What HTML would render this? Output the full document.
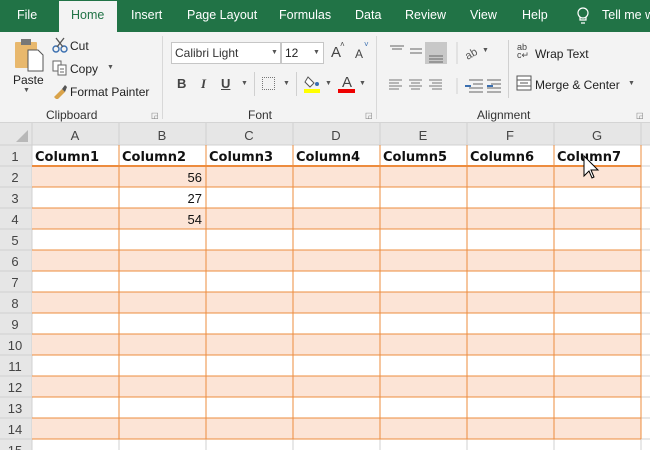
<!DOCTYPE html>
<html><head><meta charset="utf-8"><style>
*{margin:0;padding:0;box-sizing:border-box}
body{width:650px;height:450px;overflow:hidden;background:#fff;font-family:"Liberation Sans",sans-serif;position:relative}
.a{position:absolute;white-space:nowrap}
.tab{position:absolute;top:8px;color:#fff;font-size:12.5px;white-space:nowrap}
.r{font-size:12px;color:#222}
.sm{font-size:11px;color:#444}
</style></head><body>
<div class="a" style="left:0;top:0;width:650px;height:32px;background:#217346"></div>
<div class="a" style="left:59px;top:1px;width:58px;height:31px;background:#f3f3f3"></div>
<span class="tab" style="left:17px">File</span>
<span class="tab" style="left:71px;color:#217346">Home</span>
<span class="tab" style="left:131px">Insert</span>
<span class="tab" style="left:187px">Page Layout</span>
<span class="tab" style="left:279px">Formulas</span>
<span class="tab" style="left:355px">Data</span>
<span class="tab" style="left:405px">Review</span>
<span class="tab" style="left:470px">View</span>
<span class="tab" style="left:522px">Help</span>
<svg class="a" style="left:576px;top:7px" width="14" height="18"><circle cx="7" cy="6" r="5" fill="none" stroke="#fff" stroke-width="1.2"/><path d="M4 10v3h6v-3M5 16h4" stroke="#fff" stroke-width="1.2" fill="none"/></svg>
<span class="tab" style="left:602px">Tell me w</span>

<div class="a" style="left:0;top:32px;width:650px;height:91px;background:#f3f3f3;border-bottom:1px solid #d4d4d4"></div>
<svg class="a" style="left:14px;top:38px" width="30" height="34"><rect x="1" y="4" width="22" height="26" fill="#e8b86d" rx="1"/><rect x="7" y="1" width="10" height="6" fill="#777"/><path d="M14 12h10l5 5v16h-15z" fill="#fff" stroke="#555"/></svg>
<span class="a r" style="left:13px;top:73px">Paste</span>
<span class="a" style="left:23px;top:87px;font-size:7px;color:#555">▼</span>
<svg class="a" style="left:52px;top:37px" width="16" height="16"><circle cx="4" cy="12" r="3" fill="none" stroke="#3a6fb0" stroke-width="1.4"/><circle cx="12" cy="12" r="3" fill="none" stroke="#3a6fb0" stroke-width="1.4"/><path d="M5 10L12 1M11 10L4 1" stroke="#555" stroke-width="1.3"/></svg>
<span class="a r" style="left:70px;top:39px">Cut</span>
<svg class="a" style="left:52px;top:60px" width="16" height="16"><rect x="1" y="1" width="8" height="10" fill="#fff" stroke="#666"/><rect x="6" y="5" width="8" height="10" fill="#fff" stroke="#666"/><path d="M8 9h4M8 12h4" stroke="#666"/></svg>
<span class="a r" style="left:70px;top:62px">Copy</span>
<span class="a" style="left:107px;top:64px;font-size:7px;color:#555">▼</span>
<svg class="a" style="left:52px;top:83px" width="16" height="16"><path d="M2 14l8-8 3 3-8 8z" fill="#d9a34a"/><path d="M10 6l3-4 2 2-2 5z" fill="#555"/></svg>
<span class="a r" style="left:70px;top:85px">Format Painter</span>
<span class="a" style="left:46px;top:108px;font-size:12px;color:#333">Clipboard</span>
<span class="a" style="left:151px;top:111px;font-size:8px;color:#777">◲</span>
<div class="a" style="left:162px;top:36px;width:1px;height:83px;background:#d8d8d8"></div>
<div class="a" style="left:171px;top:42px;width:110px;height:22px;background:#fff;border:1px solid #c6c6c6"></div>
<span class="a r" style="left:175px;top:46px;color:#333">Calibri Light</span>
<span class="a" style="left:271px;top:49px;font-size:7px;color:#555">▼</span>
<div class="a" style="left:281px;top:42px;width:43px;height:22px;background:#fff;border:1px solid #c6c6c6"></div>
<span class="a r" style="left:285px;top:46px">12</span>
<span class="a" style="left:313px;top:49px;font-size:7px;color:#555">▼</span>
<span class="a" style="left:331px;top:44px;font-size:15px;color:#444">A</span><span class="a" style="left:340px;top:40px;font-size:8px;color:#444">˄</span>
<span class="a" style="left:355px;top:47px;font-size:12px;color:#444">A</span><span class="a" style="left:364px;top:40px;font-size:8px;color:#3a6fb0">˅</span>
<span class="a" style="left:177px;top:76px;font-size:13px;font-weight:bold;color:#444">B</span>
<span class="a" style="left:201px;top:76px;font-size:13px;font-style:italic;font-family:'Liberation Serif';font-weight:bold;color:#444">I</span>
<span class="a" style="left:221px;top:76px;font-size:13px;text-decoration:underline;font-weight:bold;color:#444">U</span>
<span class="a" style="left:241px;top:80px;font-size:7px;color:#555">▼</span>
<div class="a" style="left:254px;top:72px;width:1px;height:24px;background:#d0d0d0"></div>
<div class="a" style="left:262px;top:77px;width:13px;height:13px;border:1px dotted #777"></div>
<span class="a" style="left:283px;top:80px;font-size:7px;color:#555">▼</span>
<div class="a" style="left:296px;top:72px;width:1px;height:24px;background:#d0d0d0"></div>
<svg class="a" style="left:303px;top:73px" width="18" height="20"><path d="M5 4l6 6-4 4-5-5z" fill="#fff" stroke="#555"/><circle cx="14" cy="11" r="2" fill="#3a6fb0"/><rect x="1" y="16" width="16" height="4" fill="#ffff00"/></svg>
<span class="a" style="left:325px;top:80px;font-size:7px;color:#555">▼</span>
<span class="a" style="left:342px;top:74px;font-size:15px;color:#444">A</span>
<div class="a" style="left:338px;top:89px;width:17px;height:4px;background:#e00"></div>
<span class="a" style="left:359px;top:80px;font-size:7px;color:#555">▼</span>
<span class="a" style="left:248px;top:108px;font-size:12px;color:#333">Font</span>
<span class="a" style="left:365px;top:111px;font-size:8px;color:#777">◲</span>
<div class="a" style="left:376px;top:36px;width:1px;height:83px;background:#d8d8d8"></div>
<svg class="a" style="left:385px;top:40px" width="120" height="60">
<g stroke="#666" stroke-width="1"><path d="M5 6h14M7 9h10"/><path d="M25 9h12M25 13h12"/></g>
<rect x="40" y="2" width="22" height="22" fill="#c8c8c8"/>
<path d="M44 16h14M44 19h14M44 22h14" stroke="#666"/>
<path d="M4 40h13M4 43h10M4 46h13M4 49h10M24 40h13M26 43h9M24 46h13M26 49h9M44 40h13M47 43h10M44 46h13M47 49h10" stroke="#777"/>
<path d="M72 38v16M72 2v22" stroke="#d0d0d0"/>
<path d="M84 40h14M88 44h10M84 48h14M84 52h14M102 40h14M106 44h10M102 48h14M102 52h14" stroke="#666"/>
<path d="M80 46h6M102 46h6" stroke="#3a6fb0" stroke-width="2"/>
<text x="80" y="18" font-size="11" fill="#555" font-family="Liberation Sans" transform="rotate(-30 85 14)">ab</text>
</svg>
<span class="a" style="left:482px;top:47px;font-size:7px;color:#555">▼</span>
<div class="a" style="left:508px;top:40px;width:1px;height:58px;background:#d0d0d0"></div>
<span class="a" style="left:517px;top:43px;font-size:9px;line-height:8px;color:#444">ab<br>c↵</span>
<span class="a r" style="left:535px;top:47px">Wrap Text</span>
<svg class="a" style="left:516px;top:75px" width="16" height="16"><rect x="1" y="1" width="14" height="14" fill="#fff" stroke="#555"/><path d="M1 5h14M1 11h14M4 8h8" stroke="#555"/></svg>
<span class="a r" style="left:535px;top:78px">Merge &amp; Center</span>
<span class="a" style="left:628px;top:80px;font-size:7px;color:#555">▼</span>
<span class="a" style="left:477px;top:108px;font-size:12px;color:#333">Alignment</span>
<span class="a" style="left:636px;top:111px;font-size:8px;color:#777">◲</span>

<svg class="a" style="left:0;top:123px" width="650" height="327" font-family="Liberation Sans">
<rect x="0" y="0" width="650" height="22" fill="#e6e6e6"/>
<rect x="0" y="0" width="32" height="327" fill="#e6e6e6"/>
<path d="M16 19L28 7V19z" fill="#b8b8b8"/>
<g stroke="#d0d0d0">
<path d="M119 0v22M206 0v22M293 0v22M380 0v22M467 0v22M554 0v22M641 0v327M32 0v327"/>
<path d="M0 22h650"/>
<path d="M0 43h32M0 64h32M0 85h32M0 106h32M0 127h32M0 148h32M0 169h32M0 190h32M0 211h32M0 232h32M0 253h32M0 274h32M0 295h32M0 316h32"/>
<path d="M641 43h9M641 64h9M641 85h9M641 106h9M641 127h9M641 148h9M641 169h9M641 190h9M641 211h9M641 232h9M641 253h9M641 274h9M641 295h9M641 316h9"/>
</g>
<g fill="#fce4d6">
<rect x="32" y="43" width="609" height="21"/><rect x="32" y="85" width="609" height="21"/><rect x="32" y="127" width="609" height="21"/><rect x="32" y="169" width="609" height="21"/><rect x="32" y="211" width="609" height="21"/><rect x="32" y="253" width="609" height="21"/><rect x="32" y="295" width="609" height="21"/>
</g>
<path d="M32 316v11M119 316v11M206 316v11M293 316v11M380 316v11M467 316v11M554 316v11" stroke="#d0d0d0"/>
<g stroke="#ed8c3e">
<path d="M119 22v294M206 22v294M293 22v294M380 22v294M467 22v294M554 22v294M641 22v294"/>
<path d="M32 64h609M32 85h609M32 106h609M32 127h609M32 148h609M32 169h609M32 190h609M32 211h609M32 232h609M32 253h609M32 274h609M32 295h609M32 316h609"/>
<path d="M32 43h609" stroke-width="2"/>
</g>
<g font-size="13" fill="#444" text-anchor="middle">
<text x="75" y="17">A</text><text x="162" y="17">B</text><text x="249" y="17">C</text><text x="336" y="17">D</text><text x="423" y="17">E</text><text x="510" y="17">F</text><text x="597" y="17">G</text>
</g>
<g font-size="13" fill="#444" text-anchor="middle">
<text x="15" y="38">1</text><text x="15" y="59">2</text><text x="15" y="80">3</text><text x="15" y="101">4</text><text x="15" y="122">5</text><text x="15" y="143">6</text><text x="15" y="164">7</text><text x="15" y="185">8</text><text x="15" y="206">9</text><text x="15" y="227">10</text><text x="15" y="248">11</text><text x="15" y="269">12</text><text x="15" y="290">13</text><text x="15" y="311">14</text><text x="15" y="332">15</text>
</g>
<g font-size="13" font-weight="bold" fill="#111" font-family="DejaVu Sans">
<text x="35" y="38">Column1</text><text x="122" y="38">Column2</text><text x="209" y="38">Column3</text><text x="296" y="38">Column4</text><text x="383" y="38">Column5</text><text x="470" y="38">Column6</text><text x="557" y="38">Column7</text>
</g>
<g font-size="13" fill="#111" text-anchor="end">
<text x="202" y="59">56</text><text x="202" y="80">27</text><text x="202" y="101">54</text>
</g>
<path d="M584 33v20l5-5 3 7 2-1-3-7h7z" fill="#fff" stroke="#000" stroke-width="1"/>
</svg>
</body></html>
